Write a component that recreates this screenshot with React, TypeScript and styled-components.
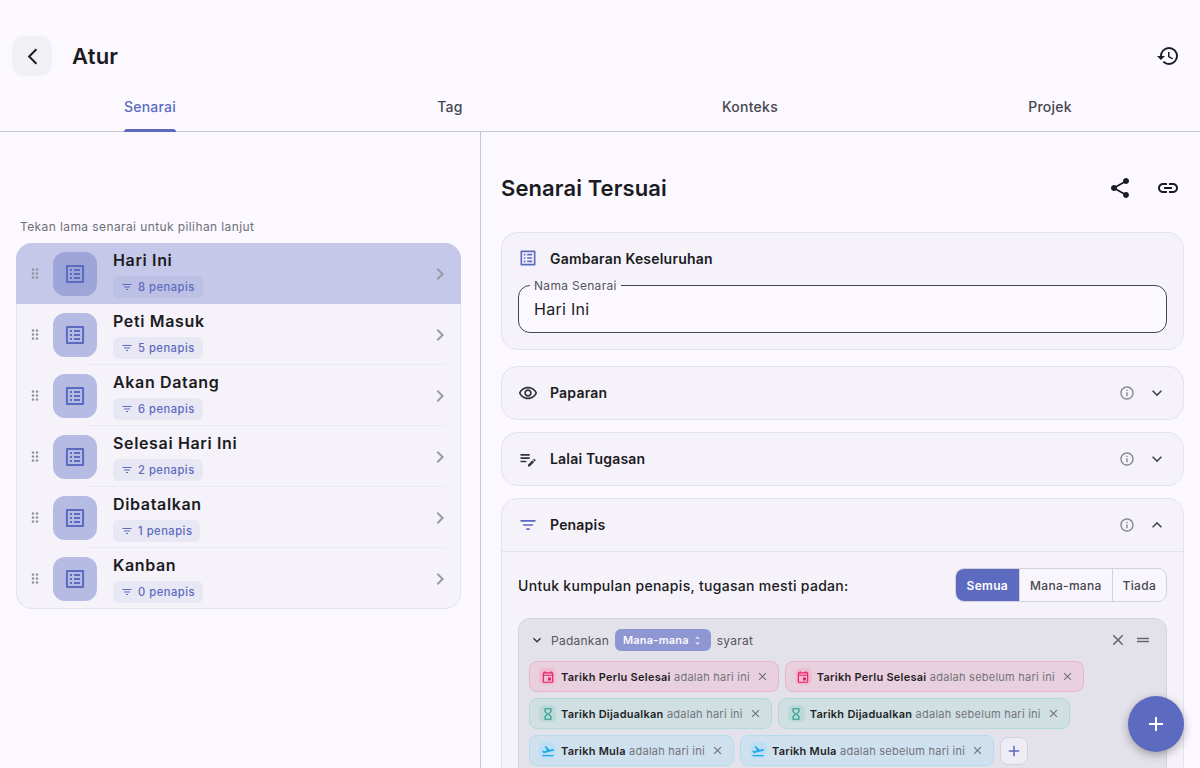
import { ReactNode } from 'react';
import styled, { createGlobalStyle } from 'styled-components';
import {
    MdArrowBackIosNew,
    MdHistory,
    MdShare,
    MdLink,
    MdOutlineListAlt,
    MdOutlineRemoveRedEye,
    MdOutlineEditNote,
    MdFilterList,
    MdInfoOutline,
    MdExpandMore,
    MdExpandLess,
    MdChevronRight,
    MdDragIndicator,
    MdClose,
    MdAdd,
    MdOutlineEvent,
    MdOutlineHourglassEmpty,
    MdFlightTakeoff,
    MdUnfoldMore,
    MdDragHandle,
} from 'react-icons/md';

const INDIGO = '#5c6bc0';

const lists = [
    { name: 'Hari Ini', count: 8, active: true },
    { name: 'Peti Masuk', count: 5 },
    { name: 'Akan Datang', count: 6 },
    { name: 'Selesai Hari Ini', count: 2 },
    { name: 'Dibatalkan', count: 1 },
    { name: 'Kanban', count: 0 },
];

type Tone = 'pink' | 'teal' | 'blue';

const tones = {
    pink: { bg: '#e9d0de', border: '#eab4c9', icon: '#e91e63', iconBg: '#eebdd0' },
    teal: { bg: '#d0dfe2', border: '#b2dad6', icon: '#1f9c8b', iconBg: '#bcd8d7' },
    blue: { bg: '#cfe0ee', border: '#b4dcf0', icon: '#1ea7ec', iconBg: '#bcdff3' },
};

const chipRows: { tone: Tone; label: string; icon: ReactNode }[] = [
    { tone: 'pink', label: 'Tarikh Perlu Selesai', icon: <MdOutlineEvent /> },
    { tone: 'teal', label: 'Tarikh Dijadualkan', icon: <MdOutlineHourglassEmpty /> },
    { tone: 'blue', label: 'Tarikh Mula', icon: <MdFlightTakeoff /> },
];

const App = () => {
    return (
        <Page>
            <GlobalStyle />
            <Header>
                <BackButton>
                    <MdArrowBackIosNew />
                </BackButton>
                <PageTitle>Atur</PageTitle>
                <HistoryIcon>
                    <MdHistory />
                </HistoryIcon>
            </Header>
            <Tabs>
                <Tab>
                    <TabLabel $active>Senarai</TabLabel>
                </Tab>
                <Tab>
                    <TabLabel>Tag</TabLabel>
                </Tab>
                <Tab>
                    <TabLabel>Konteks</TabLabel>
                </Tab>
                <Tab>
                    <TabLabel>Projek</TabLabel>
                </Tab>
            </Tabs>
            <Columns>
                <LeftPane>
                    <Hint>Tekan lama senarai untuk pilihan lanjut</Hint>
                    <ListCard>
                        {lists.map((item, i) => (
                            <ListRow key={item.name} $active={item.active} $divider={i > 0 && i < lists.length - 1}>
                                <Grip>
                                    <MdDragIndicator />
                                </Grip>
                                <ListIcon $active={item.active}>
                                    <MdOutlineListAlt />
                                </ListIcon>
                                <ListText>
                                    <ListName>{item.name}</ListName>
                                    <CountBadge $active={item.active}>
                                        <MdFilterList />
                                        {item.count} penapis
                                    </CountBadge>
                                </ListText>
                                <RowChevron>
                                    <MdChevronRight />
                                </RowChevron>
                            </ListRow>
                        ))}
                    </ListCard>
                </LeftPane>
                <RightPane>
                    <RightHeader>
                        <SectionTitle>Senarai Tersuai</SectionTitle>
                        <HeaderIcons>
                            <MdShare />
                            <MdLink />
                        </HeaderIcons>
                    </RightHeader>
                    <OverviewCard>
                        <CardTitleRow>
                            <CardIcon $accent>
                                <MdOutlineListAlt />
                            </CardIcon>
                            <CardTitle>Gambaran Keseluruhan</CardTitle>
                        </CardTitleRow>
                        <Field>
                            <FieldLegend>Nama Senarai</FieldLegend>
                            Hari Ini
                        </Field>
                    </OverviewCard>
                    <Card>
                        <CardHead>
                            <CardIcon>
                                <MdOutlineRemoveRedEye />
                            </CardIcon>
                            <CardTitle>Paparan</CardTitle>
                            <CardActions>
                                <MdInfoOutline />
                                <MdExpandMore />
                            </CardActions>
                        </CardHead>
                    </Card>
                    <Card>
                        <CardHead>
                            <CardIcon>
                                <MdOutlineEditNote />
                            </CardIcon>
                            <CardTitle>Lalai Tugasan</CardTitle>
                            <CardActions>
                                <MdInfoOutline />
                                <MdExpandMore />
                            </CardActions>
                        </CardHead>
                    </Card>
                    <Card>
                        <CardHead $bordered>
                            <CardIcon $accent>
                                <MdFilterList />
                            </CardIcon>
                            <CardTitle>Penapis</CardTitle>
                            <CardActions>
                                <MdInfoOutline />
                                <MdExpandLess />
                            </CardActions>
                        </CardHead>
                        <FilterBody>
                            <MatchRow>
                                <MatchLabel>Untuk kumpulan penapis, tugasan mesti padan:</MatchLabel>
                                <Segmented>
                                    <Segment $active>Semua</Segment>
                                    <Segment>Mana-mana</Segment>
                                    <Segment>Tiada</Segment>
                                </Segmented>
                            </MatchRow>
                            <GroupBox>
                                <GroupHead>
                                    <GroupChevron>
                                        <MdExpandMore />
                                    </GroupChevron>
                                    <span>Padankan</span>
                                    <GroupSelect>
                                        Mana-mana
                                        <MdUnfoldMore />
                                    </GroupSelect>
                                    <span>syarat</span>
                                    <GroupActions>
                                        <MdClose />
                                        <MdDragHandle />
                                    </GroupActions>
                                </GroupHead>
                                {chipRows.map((row) => (
                                    <ChipRow key={row.label}>
                                        {['adalah hari ini', 'adalah sebelum hari ini'].map((cond) => (
                                            <Chip key={cond} $tone={row.tone}>
                                                <ChipIcon $tone={row.tone}>{row.icon}</ChipIcon>
                                                <ChipText>
                                                    <b>{row.label}</b> {cond}
                                                </ChipText>
                                                <ChipClose>
                                                    <MdClose />
                                                </ChipClose>
                                            </Chip>
                                        ))}
                                        {row.tone === 'blue' && (
                                            <AddChip>
                                                <MdAdd />
                                            </AddChip>
                                        )}
                                    </ChipRow>
                                ))}
                            </GroupBox>
                        </FilterBody>
                    </Card>
                </RightPane>
            </Columns>
            <Fab>
                <MdAdd />
            </Fab>
        </Page>
    );
};

export default App;

const GlobalStyle = createGlobalStyle`
    html, body {
        margin: 0;
        height: 100%;
        overflow: hidden;
        background: #fbf8ff;
    }
    * {
        box-sizing: border-box;
    }
`;

const Page = styled.div`
    position: relative;
    width: 1200px;
    height: 768px;
    overflow: hidden;
    background: #fbf8ff;
    color: #1b1b21;
    font-family: Inter, 'Noto Sans', sans-serif;
`;

const Header = styled.header`
    height: 88px;
    padding: 36px 20px 0 12px;
    display: flex;
    align-items: flex-start;
`;

const BackButton = styled.div`
    width: 40px;
    height: 40px;
    border-radius: 11px;
    background: #f1f0f5;
    display: flex;
    align-items: center;
    justify-content: center;
    font-size: 19px;
`;

const PageTitle = styled.h1`
    margin: 0 0 0 20px;
    font-size: 22px;
    line-height: 40px;
    font-weight: 600;
    letter-spacing: 0.2px;
`;

const HistoryIcon = styled.div`
    margin-left: auto;
    height: 40px;
    display: flex;
    align-items: center;
    font-size: 24px;
`;

const Tabs = styled.nav`
    height: 44px;
    display: grid;
    grid-template-columns: repeat(4, 1fr);
    border-bottom: 1px solid #c6c5d0;
`;

const Tab = styled.div`
    display: flex;
    justify-content: center;
`;

const TabLabel = styled.span<{ $active?: boolean }>`
    position: relative;
    height: 44px;
    padding-top: 10px;
    font-size: 14px;
    line-height: 18px;
    font-weight: 500;
    letter-spacing: 0.25px;
    color: ${(p) => (p.$active ? INDIGO : '#46464f')};
    &::after {
        content: '';
        display: ${(p) => (p.$active ? 'block' : 'none')};
        position: absolute;
        left: 0;
        right: 0;
        bottom: 0;
        height: 3px;
        border-radius: 3px 3px 0 0;
        background: ${INDIGO};
    }
`;

const Columns = styled.div`
    display: flex;
    height: 637px;
`;

const LeftPane = styled.section`
    width: 481px;
    flex-shrink: 0;
    padding: 87px 19px 0 16px;
    border-right: 1px solid #c6c5d0;
`;

const Hint = styled.div`
    margin: 0 0 8px 4px;
    font-size: 12px;
    line-height: 16px;
    letter-spacing: 0.4px;
    color: #6f6f78;
`;

const ListCard = styled.div`
    outline: 1px solid #e4e2ea;
    outline-offset: -1px;
    border-radius: 16px;
    background: #f5f2fa;
    overflow: hidden;
`;

const ListRow = styled.div<{ $active?: boolean; $divider?: boolean }>`
    position: relative;
    height: 61px;
    display: flex;
    align-items: center;
    padding-left: 11px;
    background: ${(p) => (p.$active ? '#c5c8e8' : 'transparent')};
    &::after {
        content: '';
        display: ${(p) => (p.$divider ? 'block' : 'none')};
        position: absolute;
        left: 72px;
        right: 15px;
        bottom: 0;
        height: 1px;
        background: #ebe9f1;
    }
`;

const Grip = styled.div`
    width: 16px;
    display: flex;
    justify-content: center;
    font-size: 23px;
    color: #95959f;
`;

const ListIcon = styled.div<{ $active?: boolean }>`
    width: 44px;
    height: 44px;
    margin-left: 10px;
    border-radius: 12px;
    background: ${(p) => (p.$active ? '#9ea6d9' : '#b5bbe3')};
    display: flex;
    align-items: center;
    justify-content: center;
    font-size: 22px;
    color: ${INDIGO};
    svg {
        transform: scale(1.1);
    }
`;

const ListText = styled.div`
    flex: 1;
    height: 61px;
    margin-left: 16px;
    padding-top: 7px;
    display: flex;
    flex-direction: column;
    align-items: flex-start;
    gap: 6px;
`;

const ListName = styled.div`
    font-size: 16px;
    line-height: 20px;
    font-weight: 600;
    letter-spacing: 0.65px;
`;

const CountBadge = styled.div<{ $active?: boolean }>`
    height: 22px;
    padding: 0 8px;
    display: flex;
    align-items: center;
    gap: 5px;
    border-radius: 6px;
    background: ${(p) => (p.$active ? '#bcc0e4' : '#e8e7f4')};
    color: ${INDIGO};
    font-size: 11.2px;
    font-weight: 500;
    letter-spacing: 0.5px;
    svg {
        font-size: 12px;
    }
`;

const RowChevron = styled.div`
    width: 33px;
    display: flex;
    font-size: 24px;
    color: #9a9aa4;
`;

const RightPane = styled.section`
    flex: 1;
    padding: 0 16px 0 20px;
    min-width: 0;
`;

const RightHeader = styled.div`
    height: 100px;
    padding-top: 12px;
    display: flex;
    align-items: center;
    justify-content: space-between;
`;

const SectionTitle = styled.h2`
    margin: 0;
    font-size: 22px;
    font-weight: 600;
    letter-spacing: 0.1px;
`;

const HeaderIcons = styled.div`
    display: flex;
    gap: 24px;
    font-size: 24px;
    padding-right: 4px;
`;

const Card = styled.div`
    margin-top: 12px;
    border: 1px solid #e4e2ea;
    border-radius: 16px;
    background: #f5f2fa;
    overflow: hidden;
`;

const OverviewCard = styled(Card)`
    margin-top: 0;
    margin-bottom: 16px;
    height: 118px;
    padding: 0 16px;
`;

const CardTitleRow = styled.div`
    height: 52px;
    padding-bottom: 2px;
    display: flex;
    align-items: center;
`;

const CardHead = styled.div<{ $bordered?: boolean }>`
    height: 52px;
    padding: 0 16px 1px;
    display: flex;
    align-items: center;
    ${(p) => (p.$bordered ? 'border-bottom: 1px solid #e4e2ea; height: 53px;' : '')}
`;

const CardIcon = styled.div<{ $accent?: boolean }>`
    width: 20px;
    display: flex;
    font-size: 20px;
    color: ${(p) => (p.$accent ? INDIGO : '#33333b')};
`;

const CardTitle = styled.div`
    margin-left: 12px;
    font-size: 14px;
    font-weight: 600;
    letter-spacing: 0.2px;
`;

const CardActions = styled.div`
    margin-left: auto;
    display: flex;
    align-items: center;
    gap: 12px;
    svg:first-child {
        font-size: 16px;
        color: #85858f;
    }
    svg:last-child {
        font-size: 20px;
        color: #46464f;
    }
`;

const Field = styled.div`
    position: relative;
    height: 48px;
    padding: 0 15px;
    display: flex;
    align-items: center;
    background: #fbf8ff;
    border: 1px solid #46464f;
    border-radius: 12px;
    font-size: 16px;
    letter-spacing: 0.3px;
`;

const FieldLegend = styled.span`
    position: absolute;
    top: -7px;
    left: 11px;
    padding: 0 4px;
    background: linear-gradient(#f5f2fa 50%, #fbf8ff 50%);
    font-size: 12px;
    line-height: 14px;
    color: #55555e;
`;

const FilterBody = styled.div`
    padding: 16px 16px 0;
`;

const MatchRow = styled.div`
    height: 34px;
    display: flex;
    align-items: center;
    justify-content: space-between;
`;

const MatchLabel = styled.div`
    font-size: 14px;
    font-weight: 500;
    letter-spacing: 0.3px;
`;

const Segmented = styled.div`
    display: flex;
    height: 34px;
    border: 1px solid #d3d2dc;
    border-radius: 9px;
    overflow: hidden;
    background: #f8f5fc;
`;

const Segment = styled.div<{ $active?: boolean }>`
    padding: 0 ${(p) => (p.$active ? 11 : 10)}px;
    display: flex;
    align-items: center;
    font-size: 12px;
    font-weight: ${(p) => (p.$active ? 600 : 500)};
    letter-spacing: 0.3px;
    color: ${(p) => (p.$active ? '#ffffff' : '#46464f')};
    background: ${(p) => (p.$active ? INDIGO : 'transparent')};
    & + & {
        border-left: 1px solid #d3d2dc;
    }
`;

const GroupBox = styled.div`
    margin-top: 16px;
    height: 300px;
    padding: 10px 10px;
    border: 1px solid #d5d4dc;
    border-radius: 12px;
    background: #e3e1e9;
`;

const GroupHead = styled.div`
    height: 22px;
    margin-bottom: 10px;
    display: flex;
    align-items: center;
    gap: 6px;
    font-size: 12px;
    letter-spacing: 0.25px;
    color: #55555e;
`;

const GroupChevron = styled.div`
    display: flex;
    font-size: 16px;
    color: #33333b;
`;

const GroupSelect = styled.div`
    height: 22px;
    padding: 0 8px;
    display: flex;
    align-items: center;
    gap: 3px;
    border-radius: 6px;
    background: #8f97d3;
    color: #fbf8ff;
    font-size: 11px;
    font-weight: 600;
    letter-spacing: 0.2px;
    svg {
        font-size: 11px;
    }
`;

const GroupActions = styled.div`
    margin-left: auto;
    padding-right: 4px;
    display: flex;
    align-items: center;
    gap: 7px;
    font-size: 18px;
    color: #63636c;
`;

const ChipRow = styled.div`
    display: flex;
    gap: 6px;
    margin-bottom: 6px;
    align-items: center;
`;

const Chip = styled.div<{ $tone: Tone }>`
    height: 31px;
    padding: 0 9px;
    display: flex;
    align-items: center;
    border-radius: 8px;
    background: ${(p) => tones[p.$tone].bg};
    border: 1px solid ${(p) => tones[p.$tone].border};
    font-size: 11px;
    white-space: nowrap;
`;

const ChipIcon = styled.div<{ $tone: Tone }>`
    width: 17px;
    height: 17px;
    border-radius: 5px;
    display: flex;
    align-items: center;
    justify-content: center;
    font-size: 14px;
    color: ${(p) => tones[p.$tone].icon};
    background: ${(p) => tones[p.$tone].iconBg};
`;

const ChipText = styled.span`
    margin-left: 5px;
    color: #73737c;
    letter-spacing: 0.25px;
    b {
        font-weight: 600;
        color: #1f1f27;
    }
`;

const ChipClose = styled.div`
    margin-left: 6px;
    display: flex;
    font-size: 13px;
    color: #6f6f78;
`;

const AddChip = styled.div`
    width: 28px;
    height: 28px;
    display: flex;
    align-items: center;
    justify-content: center;
    border: 1px solid #d3d2dc;
    border-radius: 8px;
    background: #eeedf6;
    color: ${INDIGO};
    font-size: 18px;
`;

const Fab = styled.div`
    position: absolute;
    left: 1128px;
    top: 696px;
    width: 56px;
    height: 56px;
    border-radius: 50%;
    background: ${INDIGO};
    color: #ffffff;
    display: flex;
    align-items: center;
    justify-content: center;
    font-size: 24px;
    box-shadow: 0 3px 10px rgba(0, 0, 0, 0.3);
`;
